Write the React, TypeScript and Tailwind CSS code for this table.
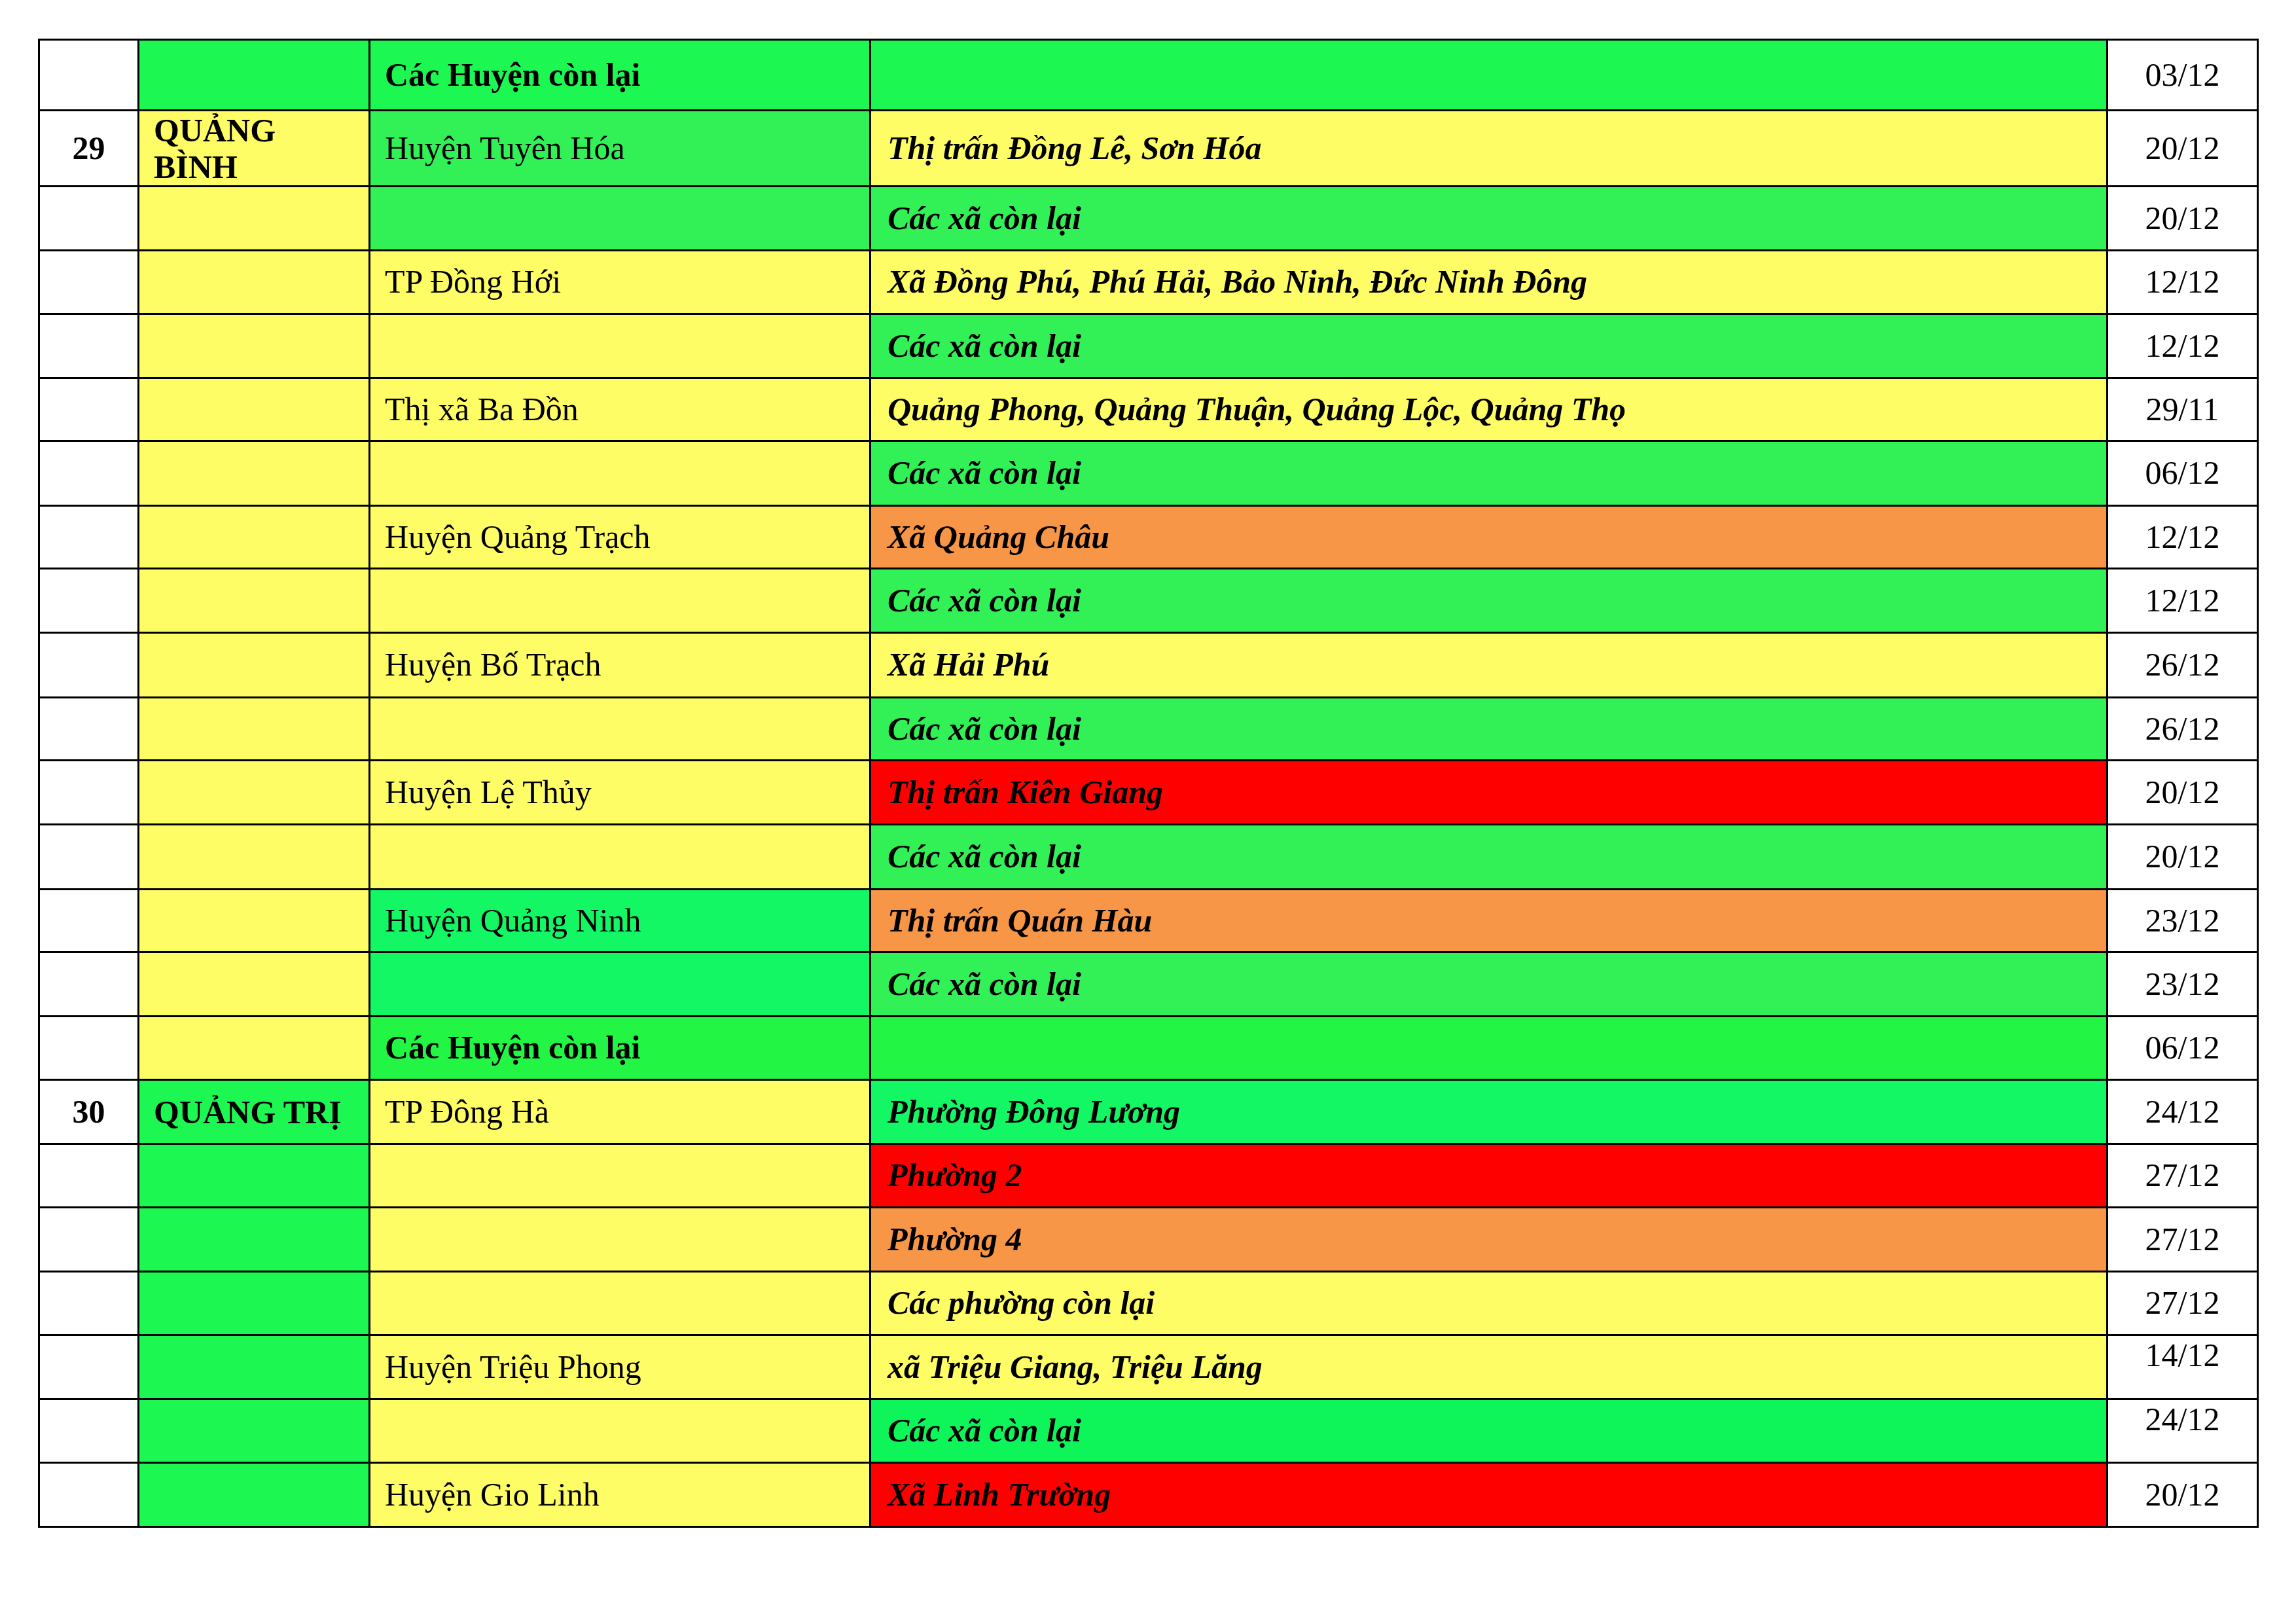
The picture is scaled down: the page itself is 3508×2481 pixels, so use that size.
const G1 = "bg-[#1cf851]";
const G2 = "bg-[#31f157]";
const G3 = "bg-[#12f763]";
const G4 = "bg-[#22f544]";
const G5 = "bg-[#0ef55a]";
const Y = "bg-[#fffd66]";
const O = "bg-[#f79646]";
const R = "bg-[#ff0000]";

type Row = {
  h: string;
  num?: string;
  prov?: string;
  provBg: string;
  dist?: string;
  distBold?: boolean;
  distBg: string;
  ward?: string;
  wardBg: string;
  date: string;
  dateTop?: boolean;
};

const REST = "Các xã còn lại";

const rows: Row[] = [
  { h: "h-[108px]", provBg: G1, dist: "Các Huyện còn lại", distBold: true, distBg: G1, wardBg: G1, date: "03/12" },
  { h: "h-[116px]", num: "29", prov: "QUẢNG BÌNH", provBg: Y, dist: "Huyện Tuyên Hóa", distBg: G2, ward: "Thị trấn Đồng Lê, Sơn Hóa", wardBg: Y, date: "20/12" },
  { h: "h-[98px]", provBg: Y, distBg: G2, ward: REST, wardBg: G2, date: "20/12" },
  { h: "h-[97px]", provBg: Y, dist: "TP Đồng Hới", distBg: Y, ward: "Xã Đồng Phú, Phú Hải, Bảo Ninh, Đức Ninh Đông", wardBg: Y, date: "12/12" },
  { h: "h-[98px]", provBg: Y, distBg: Y, ward: REST, wardBg: G2, date: "12/12" },
  { h: "h-[96px]", provBg: Y, dist: "Thị xã Ba Đồn", distBg: Y, ward: "Quảng Phong, Quảng Thuận, Quảng Lộc, Quảng Thọ", wardBg: Y, date: "29/11" },
  { h: "h-[99px]", provBg: Y, distBg: Y, ward: REST, wardBg: G2, date: "06/12" },
  { h: "h-[96px]", provBg: Y, dist: "Huyện Quảng Trạch", distBg: Y, ward: "Xã Quảng Châu", wardBg: O, date: "12/12" },
  { h: "h-[98px]", provBg: Y, distBg: Y, ward: REST, wardBg: G2, date: "12/12" },
  { h: "h-[99px]", provBg: Y, dist: "Huyện Bố Trạch", distBg: Y, ward: "Xã Hải Phú", wardBg: Y, date: "26/12" },
  { h: "h-[96px]", provBg: Y, distBg: Y, ward: REST, wardBg: G2, date: "26/12" },
  { h: "h-[98px]", provBg: Y, dist: "Huyện Lệ Thủy", distBg: Y, ward: "Thị trấn Kiên Giang", wardBg: R, date: "20/12" },
  { h: "h-[99px]", provBg: Y, distBg: Y, ward: REST, wardBg: G2, date: "20/12" },
  { h: "h-[96px]", provBg: Y, dist: "Huyện Quảng Ninh", distBg: G3, ward: "Thị trấn Quán Hàu", wardBg: O, date: "23/12" },
  { h: "h-[98px]", provBg: Y, distBg: G3, ward: REST, wardBg: G2, date: "23/12" },
  { h: "h-[97px]", provBg: Y, dist: "Các Huyện còn lại", distBold: true, distBg: G4, wardBg: G4, date: "06/12" },
  { h: "h-[98px]", num: "30", prov: "QUẢNG TRỊ", provBg: G1, dist: "TP Đông Hà", distBg: Y, ward: "Phường Đông Lương", wardBg: G3, date: "24/12" },
  { h: "h-[97px]", provBg: G1, distBg: Y, ward: "Phường 2", wardBg: R, date: "27/12" },
  { h: "h-[98px]", provBg: G1, distBg: Y, ward: "Phường 4", wardBg: O, date: "27/12" },
  { h: "h-[97px]", provBg: G1, distBg: Y, ward: "Các phường còn lại", wardBg: Y, date: "27/12" },
  { h: "h-[98px]", provBg: G1, dist: "Huyện Triệu Phong", distBg: Y, ward: "xã Triệu Giang, Triệu Lăng", wardBg: Y, date: "14/12", dateTop: true },
  { h: "h-[97px]", provBg: G1, distBg: Y, ward: REST, wardBg: G5, date: "24/12", dateTop: true },
  { h: "h-[98px]", provBg: G1, dist: "Huyện Gio Linh", distBg: Y, ward: "Xã Linh Trường", wardBg: R, date: "20/12" },
];

const cell = "border-[3px] border-black p-0 align-middle";

export default function App() {
  return (
    <div className="w-[3508px] h-[2481px] bg-white pt-[59px] pl-[58px] text-black font-['Liberation_Serif','Times_New_Roman',serif] text-[50px] leading-[1.15]">
      <table className="table-fixed border-collapse w-[3390px]">
        <colgroup>
          <col className="w-[152px]" />
          <col className="w-[353px]" />
          <col className="w-[765px]" />
          <col className="w-[1890px]" />
          <col className="w-[230px]" />
        </colgroup>
        <tbody>
          {rows.map((r, i) => (
            <tr key={i} className={r.h}>
              <td className={`${cell} bg-white text-center font-bold`}>{r.num}</td>
              <td className={`${cell} ${r.provBg} px-[22px] font-bold leading-[56px]`}>{r.prov}</td>
              <td className={`${cell} ${r.distBg} px-[22px] ${r.distBold ? "font-bold" : ""}`}>
                {r.dist}
              </td>
              <td className={`${cell} ${r.wardBg} pl-[25px] font-bold italic`}>{r.ward}</td>
              <td
                className={`${cell} bg-white text-center ${r.dateTop ? "align-top pt-[1px]" : ""}`}
              >
                {r.date}
              </td>
            </tr>
          ))}
        </tbody>
      </table>
    </div>
  );
}
